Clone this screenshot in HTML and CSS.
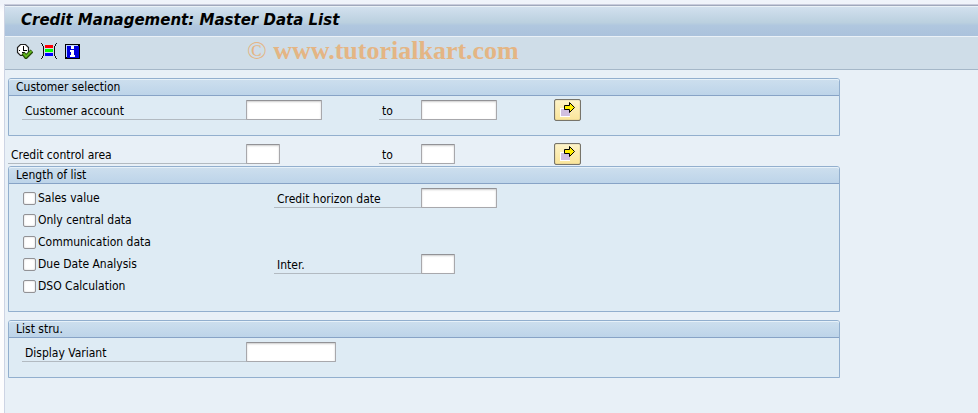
FILE: index.html
```html
<!DOCTYPE html>
<html lang="en">
<head>
    <meta charset="UTF-8">
    <meta name="viewport" content="width=device-width, initial-scale=1.0">
    <title>Credit Management: Master Data List</title>
    <link rel="stylesheet" href="styles.css">
</head>
<body>
    <div class="window">
        <header class="title-bar">
            <h1>Credit Management: Master Data List</h1>
        </header>

        <div class="toolbar">
            <button type="button" class="tool-btn" aria-label="Execute">
                <svg width="17" height="16" viewBox="0 0 17 16">
                    <path d="M4.500 1.500h5l3 3v5l-3 3h-5l-3-3v-5z" fill="#fff" stroke="#222" stroke-width="1.200"/>
                    <path d="M7.500 3v5M7.500 7.500H11M6 9.500h3M3 7.500h1" fill="none" stroke="#000"/>
                    <path d="M7 10l3 4 6-6" fill="none" stroke="#244a08" stroke-width="4"/>
                    <path d="M7.500 10.500l2.500 3 5.500-5.500" fill="none" stroke="#62b51e" stroke-width="2"/>
                </svg>
            </button>
            <button type="button" class="tool-btn" aria-label="Get variant">
                <svg width="16" height="16" viewBox="0 0 16 16" shape-rendering="crispEdges">
                    <path d="M0 0h1v1h1v2h1v10H2v2H1v1H0v-1h1v-2h1V3H1V1H0zM15 0h1v1h-1v2h-1v10h1v2h1v1h-1v-1h-1v-2h-1V3h1V1h1z" fill="#111"/>
                    <path d="M4 2h8v3H4z" fill="#f00"/>
                    <path d="M4 6h8v3H4z" fill="#0f0"/>
                    <path d="M4 10h8v3H4z" fill="#00f"/>
                </svg>
            </button>
            <button type="button" class="tool-btn" aria-label="Information">
                <svg width="15" height="15" viewBox="0 0 15 15" shape-rendering="crispEdges">
                    <path d="M0 0h15v15H0z" fill="#000"/>
                    <path d="M1 1h12v12H1z" fill="#bcd4ff"/>
                    <path d="M2 2h12v12H2z" fill="#00d"/>
                    <path d="M6 2h3v3H6zM5 6h4v5h1v2H5v-2h1V8H5z" fill="#fff"/>
                </svg>
            </button>
            <div class="watermark"><span>©</span> www.tutorialkart.com</div>
        </div>

        <form class="screen">
            <fieldset class="group">
                <legend>Customer selection</legend>
                <div class="group-body">
                    <div class="range-row">
                        <label class="field-label" for="customer-from">Customer account</label>
                        <input type="text" class="medium" id="customer-from">
                        <label class="field-label" for="customer-to">to</label>
                        <input type="text" class="medium" id="customer-to">
                        <button type="button" class="multi-btn" aria-label="Multiple selection">
                            <svg width="15" height="15" viewBox="0 0 15 15">
                                <path d="M0 6h10v9H0z" fill="#fff"/>
                                <path d="M1 7h9v7H1z" fill="#d0bfe0"/>
                                <path d="M4.500 3.500h5v-3l5 5-5 5v-3h-5z" fill="#ffed00" stroke="#000"/>
                            </svg>
                        </button>
                    </div>
                </div>
            </fieldset>

            <div class="range-row outer">
                <label class="field-label" for="area-from">Credit control area</label>
                <input type="text" class="short" id="area-from">
                <label class="field-label" for="area-to">to</label>
                <input type="text" class="short" id="area-to">
                <button type="button" class="multi-btn" aria-label="Multiple selection">
                    <svg width="15" height="15" viewBox="0 0 15 15">
                        <path d="M0 6h10v9H0z" fill="#fff"/>
                        <path d="M1 7h9v7H1z" fill="#d0bfe0"/>
                        <path d="M4.500 3.500h5v-3l5 5-5 5v-3h-5z" fill="#ffed00" stroke="#000"/>
                    </svg>
                </button>
            </div>

            <fieldset class="group">
                <legend>Length of list</legend>
                <div class="group-body">
                    <div class="option-row">
                        <label class="check"><input type="checkbox">Sales value</label>
                        <label class="field-label" for="horizon">Credit horizon date</label>
                        <input type="text" class="medium" id="horizon">
                    </div>
                    <div class="option-row">
                        <label class="check"><input type="checkbox">Only central data</label>
                    </div>
                    <div class="option-row">
                        <label class="check"><input type="checkbox">Communication data</label>
                    </div>
                    <div class="option-row">
                        <label class="check"><input type="checkbox">Due Date Analysis</label>
                        <label class="field-label" for="interval">Inter.</label>
                        <input type="text" class="short" id="interval">
                    </div>
                    <div class="option-row">
                        <label class="check"><input type="checkbox">DSO Calculation</label>
                    </div>
                </div>
            </fieldset>

            <fieldset class="group spaced">
                <legend>List stru.</legend>
                <div class="group-body">
                    <div class="range-row">
                        <label class="field-label" for="variant">Display Variant</label>
                        <input type="text" class="long" id="variant">
                    </div>
                </div>
            </fieldset>
        </form>
    </div>
</body>
</html>
```
FILE: styles.css
```css
* {
    box-sizing: border-box;
}
body {
    margin: 0;
    padding: 4px 0 0 4px;
    background: linear-gradient(#eff3fa, #f0f3fa 4px, #fdfdfe 12px);
    font-family: "DejaVu Sans Condensed", "DejaVu Sans", Tahoma, sans-serif;
    font-stretch: condensed;
    font-size: 12px;
    color: #000;
}
.window {
    min-height: calc(100vh - 4px);
    border-left: 1px solid #cdd4e4;
    border-top: 1px solid #c8cbdb;
    background: #e8f0f7;
}
.title-bar {
    height: 32px;
    padding: 0 16px;
    border-top: 1px solid #a0a8bc;
    border-bottom: 1px solid #eaf1f7;
    background: linear-gradient(#d3e1ef, #bbd0df 55%, #b0c7df 65%, #abc2dc);
    box-shadow: inset 0 1px #eaf1f7;
}
h1 {
    margin: 0;
    font-family: "DejaVu Sans", Tahoma, sans-serif;
    font-size: 15px;
    font-stretch: normal;
    line-height: 28px;
    font-style: italic;
}
.toolbar {
    display: flex;
    align-items: center;
    gap: 8px;
    height: 33px;
    padding: 0 11px 4px;
    border-bottom: 1px solid #a5b7c8;
    background: #cfdde8;
}
.tool-btn {
    display: flex;
    padding: 0;
    border: 0;
    background: none;
}
.watermark {
    margin-left: 159px;
    font: bold 26px/28px "Liberation Serif", serif;
    color: #e4b584;
}
.watermark span {
    font-weight: normal;
}
.screen {
    max-width: 835px;
    padding: 8px 0 0 3px;
}
.group {
    min-width: 0;
    margin: 0;
    padding: 0;
    border: 1px solid #92afce;
    border-radius: 3px 3px 0 0;
    background: #deebf4;
}
.group.spaced {
    margin-top: 8px;
}
legend {
    float: left;
    width: 100%;
    height: 17px;
    padding: 0 7px;
    border-bottom: 1px solid #87a3c6;
    border-radius: 2px 2px 0 0;
    background: linear-gradient(#cddfee, #bdd4e9);
    box-shadow: inset 0 1px #e6f1f9;
    line-height: 16px;
}
.group-body {
    display: flex;
    flex-direction: column;
    gap: 2px;
    clear: both;
    padding: 4px 13px 15px;
}
.range-row, .option-row {
    display: grid;
    grid-template-rows: 20px;
    align-items: center;
}
.range-row {
    grid-template-columns: 224px 133px 42px 133px auto;
}
.range-row.outer {
    grid-template-columns: 238px 133px 42px 133px auto;
    margin: 8px 0 2px;
}
.option-row {
    grid-template-columns: 252px 147px auto;
}
.field-label {
    height: 20px;
    padding-left: 3px;
    border-bottom: 1px solid #b2bac1;
    line-height: 22px;
}
input[type="text"] {
    height: 20px;
    padding: 0 3px;
    border: 1px solid #a8a8ac;
    border-top-color: #929296;
    border-radius: 1px;
    background: #fff;
    box-shadow: inset 0 1px 2px #ccc;
    font: inherit;
}
.short {
    width: 34px;
}
.medium {
    width: 76px;
}
.long {
    width: 90px;
}
.check {
    display: flex;
    align-items: center;
    gap: 2px;
    padding-left: 1px;
    line-height: 22px;
}
.check input {
    appearance: none;
    width: 13px;
    height: 13px;
    margin: 0;
    border: 1px solid #929296;
    border-radius: 2px;
    background: #fff;
    box-shadow: inset 0 0 2px #ccc;
}
.check input:checked {
    background: #5a82b0;
}
.multi-btn {
    display: flex;
    align-items: center;
    justify-content: center;
    width: 27px;
    height: 22px;
    padding: 0 0 2px;
    border: 1px solid #77746a;
    border-radius: 2px;
    background: linear-gradient(#fdf3c8, #fae59a);
    box-shadow: inset 0 0 1px #77746a;
}
```
